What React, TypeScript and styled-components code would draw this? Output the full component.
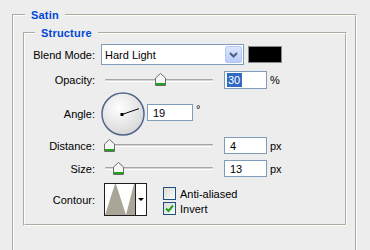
import React from "react";
import styled, { createGlobalStyle } from "styled-components";

const Global = createGlobalStyle`
  html, body { margin: 0; padding: 0; background: #ededed; overflow: hidden; }
  body { font-family: "Liberation Sans", Arial, sans-serif; font-size: 11px; color: #000; }
`;

const Page = styled.div`
  width: 370px;
  height: 250px;
  overflow: hidden;
  box-sizing: border-box;
  padding: 8px 0 0 12px;
`;

const Group = styled.fieldset<{ $w: number; $pt: number; $pl: number; $pb: number }>`
  margin: 0;
  min-width: 0;
  box-sizing: border-box;
  width: ${(p) => p.$w}px;
  border: 2px groove #fffdf4;
  padding: ${(p) => p.$pt}px 0 ${(p) => p.$pb}px ${(p) => p.$pl}px;
`;

const Title = styled.legend<{ $ml: number }>`
  margin-left: ${(p) => p.$ml}px;
  padding: 0 6px;
  font-weight: bold;
  font-size: 11px;
  line-height: 14px;
  letter-spacing: 0.2px;
  color: #0046d5;
`;

const Row = styled.div<{ $h: number; $mt: number }>`
  display: grid;
  grid-template-columns: 70px auto;
  column-gap: 6px;
  align-items: center;
  height: ${(p) => p.$h}px;
  margin-top: ${(p) => p.$mt}px;
`;

const Label = styled.span`
  text-align: right;
  white-space: nowrap;
`;

const Controls = styled.div<{ $top?: boolean }>`
  display: flex;
  align-items: ${(p) => (p.$top ? "flex-start" : "center")};
  height: 100%;
`;

const Select = styled.div`
  width: 143px;
  height: 21px;
  box-sizing: border-box;
  border: 1px solid #7f9db9;
  background: #fff;
  display: flex;
  align-items: center;
  padding: 0 1px 0 3px;
`;

const SelectText = styled.span`
  flex: 1;
`;

const DropButton = styled.div`
  width: 17px;
  height: 17px;
  box-sizing: border-box;
  border: 1px solid #b4c8f4;
  border-radius: 2px;
  background: linear-gradient(#dbe6fd, #b9cdf8);
  display: flex;
  align-items: center;
  justify-content: center;
`;

const Swatch = styled.div`
  width: 34px;
  height: 17px;
  box-sizing: border-box;
  margin-left: 4px;
  border: 1px solid #8a8a8a;
  background: #000;
`;

const Slider = styled.div`
  position: relative;
  width: 116px;
  height: 100%;
  box-sizing: border-box;
  padding: 0 4px;
  margin-right: 7px;
  display: flex;
  align-items: center;
`;

const Track = styled.div`
  flex: 1;
  height: 3px;
  box-sizing: border-box;
  border-top: 1px solid #a5a5a5;
  border-bottom: 1px solid #ffffff;
  border-radius: 1px;
  background: #d4d4d4;
`;

const Thumb = styled.svg`
  position: absolute;
  top: 50%;
  margin-top: -7px;
`;

const TextBox = styled.div<{ $w: number; $h: number; $mt?: number }>`
  width: ${(p) => p.$w}px;
  height: ${(p) => p.$h}px;
  margin-top: ${(p) => p.$mt ?? 0}px;
  box-sizing: border-box;
  border: 1px solid #7f9db9;
  background: #fff;
  display: flex;
  align-items: center;
  padding-left: 5px;
`;

const Selected = styled.span`
  align-self: stretch;
  display: flex;
  align-items: center;
  margin: 1px 0 1px -3px;
  padding: 0 2px 0 1px;
  background: #316ac5;
  color: #fff;
`;

const Unit = styled.span<{ $mt?: number }>`
  margin-left: 3px;
  margin-top: ${(p) => p.$mt ?? 0}px;
`;

const Dial = styled.svg`
  margin-right: 1px;
`;

const ContourBox = styled.div`
  margin-left: 3px;
  width: 43px;
  height: 33px;
  box-sizing: border-box;
  border: 1px solid #1e1e1e;
  background: #fff;
  display: flex;
`;

const ContourArrow = styled.div`
  flex: 1;
  border-left: 1px solid #1e1e1e;
  display: flex;
  align-items: center;
  justify-content: center;
`;

const ArrowHead = styled.span`
  width: 0;
  height: 0;
  border-left: 3px solid transparent;
  border-right: 3px solid transparent;
  border-top: 3px solid #000;
`;

const CheckList = styled.div`
  align-self: flex-start;
  display: flex;
  flex-direction: column;
  gap: 2px;
  margin-left: 16px;
  padding-top: 4px;
`;

const CheckRow = styled.label`
  display: flex;
  align-items: center;
  gap: 4px;
  height: 13px;
`;

const CheckBox = styled.span`
  width: 13px;
  height: 13px;
  box-sizing: border-box;
  border: 1px solid #1c5180;
  background: linear-gradient(135deg, #dcdcd4, #fbfbf9);
  display: flex;
  align-items: center;
  justify-content: center;
`;

const ThumbIcon = ({ left }: { left: number }) => (
  <Thumb width="11" height="13" viewBox="0 0 11 13" style={{ left }}>
    <path d="M0.5 12.5 V5 L5.5 0.5 L10.5 5 V12.5 Z" fill="#f6f6f4" stroke="#6c6c6c" />
    <rect x="1" y="10" width="9" height="2" fill="#1fa31f" />
  </Thumb>
);

const SliderField = ({ pos }: { pos: number }) => (
  <Slider>
    <Track />
    <ThumbIcon left={pos} />
  </Slider>
);

const Check = ({ checked, label }: { checked?: boolean; label: string }) => (
  <CheckRow>
    <CheckBox>
      {checked && (
        <svg width="9" height="9" viewBox="0 0 9 9">
          <polyline points="1,4.5 3.5,7 8,1.5" fill="none" stroke="#21a121" strokeWidth="2" />
        </svg>
      )}
    </CheckBox>
    <span>{label}</span>
  </CheckRow>
);

export default function App() {
  const angle = 19;
  const rad = (angle * Math.PI) / 180;
  const cx = 21;
  const cy = 22.5;
  const len = 18;
  return (
    <>
      <Global />
      <Page>
        <Group $w={345} $pt={4} $pl={9} $pb={60}>
          <Title $ml={2}>Satin</Title>
          <Group $w={324} $pt={4} $pl={0} $pb={8}>
            <Title $ml={10}>Structure</Title>

            <Row $h={21} $mt={0}>
              <Label>Blend Mode:</Label>
              <Controls>
                <Select>
                  <SelectText>Hard Light</SelectText>
                  <DropButton>
                    <svg width="9" height="6" viewBox="0 0 9 6">
                      <polyline points="1,1 4.5,4.5 8,1" fill="none" stroke="#4d6185" strokeWidth="2" />
                    </svg>
                  </DropButton>
                </Select>
                <Swatch />
              </Controls>
            </Row>

            <Row $h={18} $mt={6}>
              <Label>Opacity:</Label>
              <Controls>
                <SliderField pos={54} />
                <TextBox $w={43} $h={18}>
                  <Selected>30</Selected>
                </TextBox>
                <Unit>%</Unit>
              </Controls>
            </Row>

            <Row $h={44} $mt={3}>
              <Label>Angle:</Label>
              <Controls $top>
                <Dial width="45" height="44" viewBox="0 0 45 44">
                  <defs>
                    <radialGradient id="dialFill" cx="40%" cy="35%" r="70%">
                      <stop offset="0" stopColor="#ffffff" />
                      <stop offset="1" stopColor="#d6d6d6" />
                    </radialGradient>
                  </defs>
                  <circle cx="22" cy="22" r="21" fill="url(#dialFill)" stroke="#55668c" strokeWidth="1.5" />
                  <line
                    x1={cx}
                    y1={cy}
                    x2={cx + len * Math.cos(rad)}
                    y2={cy - len * Math.sin(rad)}
                    stroke="#000"
                    strokeWidth="1"
                  />
                  <rect x={cx - 1.5} y={cy - 1.5} width="3" height="3" fill="#000" />
                </Dial>
                <TextBox $w={46} $h={17} $mt={12}>
                  19
                </TextBox>
                <Unit $mt={11}>°</Unit>
              </Controls>
            </Row>

            <Row $h={17} $mt={1}>
              <Label>Distance:</Label>
              <Controls>
                <SliderField pos={3} />
                <TextBox $w={43} $h={17}>
                  4
                </TextBox>
                <Unit>px</Unit>
              </Controls>
            </Row>

            <Row $h={17} $mt={6}>
              <Label>Size:</Label>
              <Controls>
                <SliderField pos={12} />
                <TextBox $w={43} $h={17}>
                  13
                </TextBox>
                <Unit>px</Unit>
              </Controls>
            </Row>

            <Row $h={33} $mt={6}>
              <Label>Contour:</Label>
              <Controls>
                <ContourBox>
                  <svg width="30" height="31" viewBox="0 0 30 31">
                    <polygon points="0,31 10,0 11,0 21,31 29,0 30,0 30,31" fill="#aaa697" />
                  </svg>
                  <ContourArrow>
                    <ArrowHead />
                  </ContourArrow>
                </ContourBox>
                <CheckList>
                  <Check label="Anti-aliased" />
                  <Check checked label="Invert" />
                </CheckList>
              </Controls>
            </Row>
          </Group>
        </Group>
      </Page>
    </>
  );
}
